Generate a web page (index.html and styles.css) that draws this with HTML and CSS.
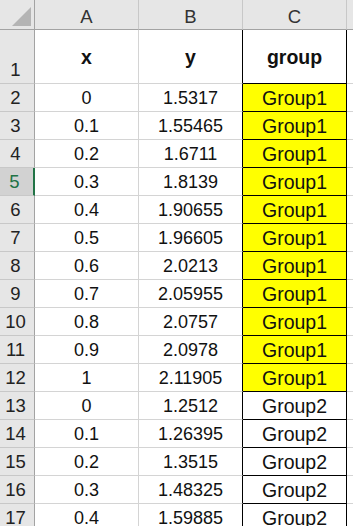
FILE: index.html
```html
<!DOCTYPE html>
<html>
<head>
<meta charset="utf-8">
<link rel="stylesheet" href="styles.css">
</head>
<body>
<div class="sheet">
  <div class="hd corner"><span class="tri"></span></div>
  <div class="hd col">A</div>
  <div class="hd col">B</div>
  <div class="hd col">C</div>
  <div class="hd col last"></div>

  <div class="rh tall">1</div>
  <div class="c tall bold">x</div>
  <div class="c tall bold bb">y</div>
  <div class="c tall bold g">group</div>
  <div class="c tall e"></div>

  <div class="rh">2</div><div class="c">0</div><div class="c bb">1.5317</div><div class="c g y">Group1</div><div class="c e"></div>
  <div class="rh">3</div><div class="c">0.1</div><div class="c bb">1.55465</div><div class="c g y">Group1</div><div class="c e"></div>
  <div class="rh">4</div><div class="c">0.2</div><div class="c bb">1.6711</div><div class="c g y">Group1</div><div class="c e"></div>
  <div class="rh sel">5</div><div class="c">0.3</div><div class="c bb">1.8139</div><div class="c g y">Group1</div><div class="c e"></div>
  <div class="rh">6</div><div class="c">0.4</div><div class="c bb">1.90655</div><div class="c g y">Group1</div><div class="c e"></div>
  <div class="rh">7</div><div class="c">0.5</div><div class="c bb">1.96605</div><div class="c g y">Group1</div><div class="c e"></div>
  <div class="rh">8</div><div class="c">0.6</div><div class="c bb">2.0213</div><div class="c g y">Group1</div><div class="c e"></div>
  <div class="rh">9</div><div class="c">0.7</div><div class="c bb">2.05955</div><div class="c g y">Group1</div><div class="c e"></div>
  <div class="rh">10</div><div class="c">0.8</div><div class="c bb">2.0757</div><div class="c g y">Group1</div><div class="c e"></div>
  <div class="rh">11</div><div class="c">0.9</div><div class="c bb">2.0978</div><div class="c g y">Group1</div><div class="c e"></div>
  <div class="rh">12</div><div class="c">1</div><div class="c bb">2.11905</div><div class="c g y">Group1</div><div class="c e"></div>
  <div class="rh">13</div><div class="c">0</div><div class="c bb">1.2512</div><div class="c g">Group2</div><div class="c e"></div>
  <div class="rh">14</div><div class="c">0.1</div><div class="c bb">1.26395</div><div class="c g">Group2</div><div class="c e"></div>
  <div class="rh">15</div><div class="c">0.2</div><div class="c bb">1.3515</div><div class="c g">Group2</div><div class="c e"></div>
  <div class="rh">16</div><div class="c">0.3</div><div class="c bb">1.48325</div><div class="c g">Group2</div><div class="c e"></div>
  <div class="rh">17</div><div class="c">0.4</div><div class="c bb">1.59885</div><div class="c g">Group2</div><div class="c e"></div>
</div>
</body>
</html>
```

FILE: styles.css
```css
html, body {
  margin: 0;
  padding: 0;
  background: #ffffff;
  overflow: hidden;
}
.sheet {
  display: grid;
  grid-template-columns: 35px 104px 104px 104px 1fr;
  grid-template-rows: 30px 54px;
  grid-auto-rows: 28px;
  font-family: "Liberation Sans", Arial, sans-serif;
  font-size: 18px;
  color: #111;
  width: 353px;
}
.hd {
  box-sizing: border-box;
  background: #e6e6e6;
  border-bottom: 1px solid #a3a3a3;
  border-right: 1px solid #c8c8c8;
}
.corner {
  position: relative;
  border-right: 1px solid #a3a3a3;
}
.tri {
  position: absolute;
  right: 3px;
  bottom: 3px;
  width: 0;
  height: 0;
  border-left: 19px solid transparent;
  border-bottom: 19px solid #b4b4b4;
}
.col {
  display: flex;
  align-items: center;
  justify-content: center;
  font-size: 18.5px;
  color: #333;
  padding-top: 4px;
}
.col.last {
  border-right: none;
}
.rh {
  box-sizing: border-box;
  background: #e6e6e6;
  border-right: 1px solid #a3a3a3;
  border-bottom: 1px solid #c8c8c8;
  display: flex;
  align-items: center;
  justify-content: center;
  padding-right: 3px;
  padding-top: 1px;
  font-size: 18.5px;
  color: #222;
}
.rh.tall {
  align-items: flex-end;
  padding-bottom: 2px;
}
.rh.sel {
  background: #d2d2d2;
  color: #217346;
  border-right: 2px solid #217346;
  padding-right: 4px;
}
.c {
  box-sizing: border-box;
  border-right: 1px solid #d4d4d4;
  border-bottom: 1px solid #d4d4d4;
  display: flex;
  align-items: center;
  justify-content: center;
  white-space: nowrap;
  padding-top: 1px;
}
.c.bold {
  font-weight: bold;
  font-size: 19.5px;
}
.c.bb {
  border-right-color: #000;
}
.c.g {
  border-right-color: #000;
  border-bottom-color: #000;
  font-size: 19.5px;
}
.c.y {
  background: #ffff00;
}
.c.e {
  border-right: none;
}
```
